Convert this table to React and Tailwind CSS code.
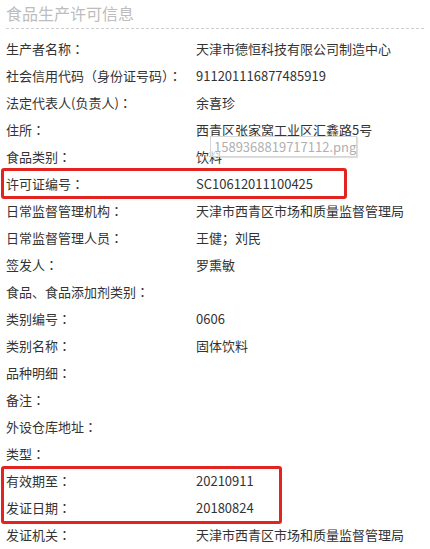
import React from "react";

const rows = [
  ["生产者名称", "天津市德恒科技有限公司制造中心"],
  ["社会信用代码（身份证号码）", "911201116877485919"],
  ["法定代表人(负责人)", "余喜珍"],
  ["住所", "西青区张家窝工业区汇鑫路5号"],
  ["食品类别", "饮料", "tip"],
  ["许可证编号", "SC10612011100425", "box1"],
  ["日常监督管理机构", "天津市西青区市场和质量监督管理局"],
  ["日常监督管理人员", "王健；刘民"],
  ["签发人", "罗熏敏"],
  ["食品、食品添加剂类别", ""],
  ["类别编号", "0606"],
  ["类别名称", "固体饮料"],
  ["品种明细", ""],
  ["备注", ""],
  ["外设仓库地址", ""],
  ["类型", ""],
  ["有效期至", "20210911", "box2"],
  ["发证日期", "20180824"],
  ["发证机关", "天津市西青区市场和质量监督管理局"],
];

const Row = ({ label, value, tip }) => (
  <div className="flex h-[27px] items-center">
    <div className="w-[190px] shrink-0 whitespace-nowrap">
      {label}
      <span style={{ fontFamily: '"Noto Sans CJK JP", sans-serif' }}>：</span>
    </div>
    <div className="relative flex-1 whitespace-nowrap">
      {value}
      {tip && (
        <div className="absolute left-[14px] top-[-11px] flex h-[21px] w-[147px] items-center border border-[#d6d6d6] bg-white/70 pl-[3px] text-[#b0b0b0] shadow-[1px_1px_1px_rgba(0,0,0,0.12)]">
          1589368819717112.png
        </div>
      )}
    </div>
  </div>
);

export default function App() {
  return (
    <div
      className="h-[549px] w-[430px] overflow-hidden bg-white px-[6px] text-[13px] text-[#333]"
      style={{ fontFamily: '"Noto Sans CJK SC", "Microsoft YaHei", sans-serif' }}
    >
      <div className="flex h-[29px] items-center border-b border-dashed border-[#cfcfcf] pb-[3px] text-[16px] text-[#bdbdbd]">
        食品生产许可信息
      </div>
      <div className="pt-[6px]">
        {rows.map(([label, value, flag], i) => {
          if (flag === "box1") {
            return (
              <div key={i} className="relative">
                <Row label={label} value={value} />
                <div className="absolute left-[-5px] top-[-2px] h-[31px] w-[346px] rounded-[3px] border-[3px] border-[#e3231f]" />
              </div>
            );
          }
          if (flag === "box2") {
            const next = rows[i + 1];
            return (
              <div key={i} className="relative">
                <Row label={label} value={value} />
                <Row label={next[0]} value={next[1]} />
                <div className="absolute left-[-5px] top-[-1px] h-[58px] w-[281px] rounded-[3px] border-[3px] border-[#e3231f]" />
              </div>
            );
          }
          if (i > 0 && rows[i - 1][2] === "box2") return null;
          return <Row key={i} label={label} value={value} tip={flag === "tip"} />;
        })}
      </div>
    </div>
  );
}
